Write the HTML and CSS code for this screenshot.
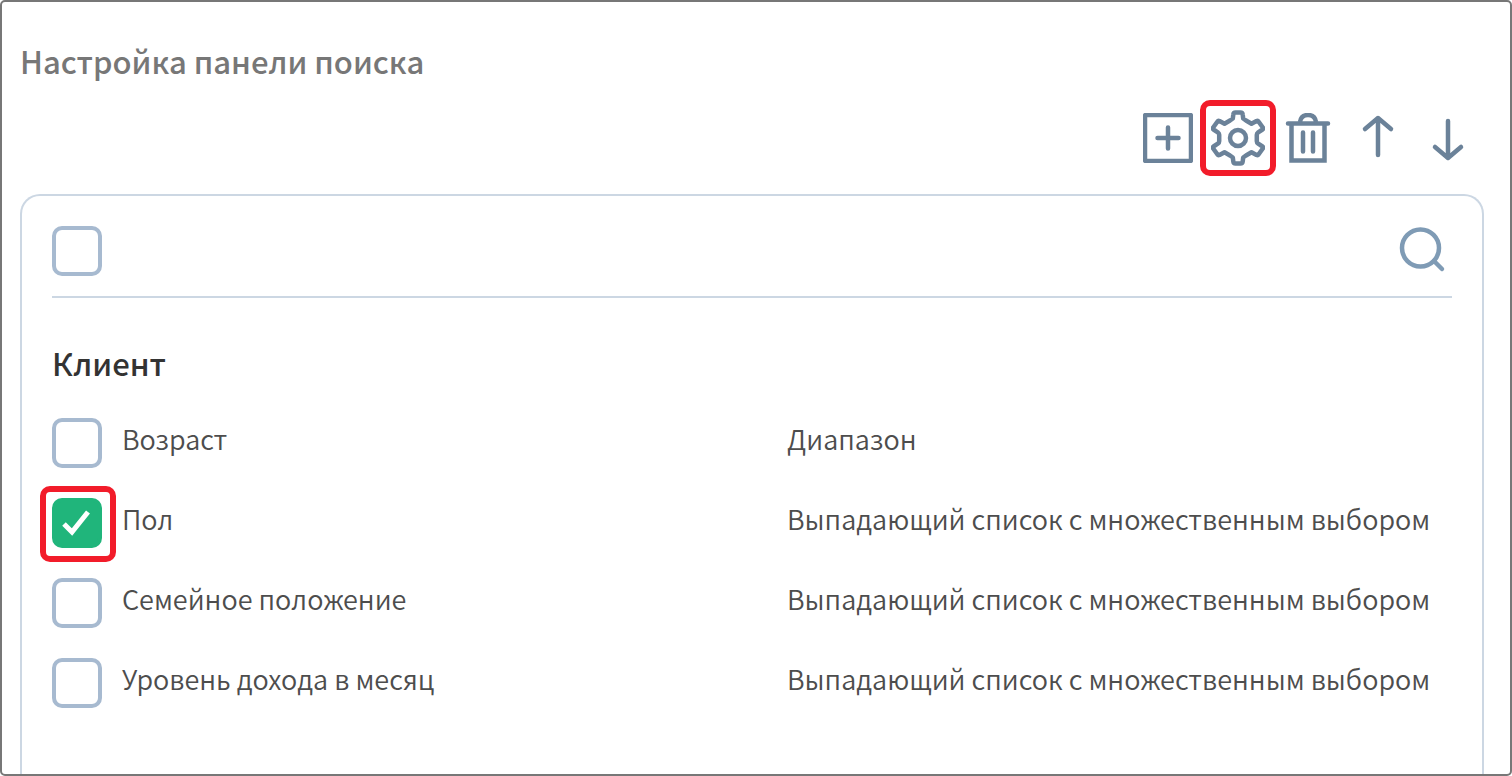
FILE: index.html
```html
<!DOCTYPE html>
<html lang="ru">
<head>
<meta charset="utf-8">
<title>Настройка панели поиска</title>
<link rel="stylesheet" href="styles.css">
</head>
<body>
<main class="window">
  <h1 class="title">Настройка панели поиска</h1>
  <div class="toolbar">
    <button class="tool" type="button" aria-label="Добавить">
      <svg class="icon" viewBox="0 0 50 50"><rect x="2" y="2" width="46" height="46" rx="1"/><path d="M25 14.500v21M14.500 25h21" stroke-linecap="round"/></svg>
    </button>
    <button class="tool marked" type="button" aria-label="Настроить">
      <svg class="icon gear" viewBox="0 0 54 56"><path d="M24.500 2.500h5q2 0 2.200 2l.5 4L35 10.500l5.500 3.200L45.500 11q1.300-.6 2 .5l4.300 6q.7 1.200-.3 2l-4.300 2.800q-1.400 1-1.400 2.500v6.400q0 1.500 1.400 2.500l4.300 2.800q1 .8.3 2l-4.300 6q-.7 1.100-2 .5l-5-2.700-5.500 3.200-2.800 2-.5 4q-.2 2-2.200 2h-5q-2 0-2.200-2l-.5-4-2.800-2-5.500-3.200-5 2.700q-1.300.6-2-.5l-4.300-6q-.7-1.200.3-2l4.300-2.800q1.400-1 1.400-2.500v-6.400q0-1.500-1.400-2.500l-4.300-2.800q-1-.8-.3-2l4.300-6q.7-1.100 2-.5l5 2.700 5.500-3.200 2.800-2 .5-4q.2-2 2.200-2z" stroke-linejoin="round"/><circle cx="27" cy="28" r="8"/></svg>
    </button>
    <button class="tool" type="button" aria-label="Удалить">
      <svg class="icon" viewBox="0 0 50 50"><path d="M5 10.500h40M8.500 10.500v37h33v-37" stroke-linecap="round"/><path d="M17 9q1-7 8-7t8 7"/><path d="M20 19.500v19M30 19.500v19" stroke-linecap="round"/></svg>
    </button>
    <button class="tool" type="button" aria-label="Вверх">
      <svg class="icon" viewBox="0 0 50 50"><path d="M25 42V5M12 16L25 5l13 11" stroke-linecap="round" stroke-linejoin="round"/></svg>
    </button>
    <button class="tool" type="button" aria-label="Вниз">
      <svg class="icon" viewBox="0 0 50 50"><path d="M25 8v37M12 34l13 11 13-11" stroke-linecap="round" stroke-linejoin="round"/></svg>
    </button>
  </div>
  <section class="panel">
    <div class="panel-head">
      <span class="check"><input class="box" type="checkbox" aria-label="Выбрать все"></span>
      <button class="tool search" type="button" aria-label="Поиск">
        <svg class="icon" viewBox="0 0 50 50"><circle cx="21.500" cy="22" r="18.500"/><path d="M35 35l8 8" stroke-linecap="round"/></svg>
      </button>
    </div>
    <h2 class="group">Клиент</h2>
    <ul class="fields">
      <li class="field"><span class="check"><input class="box" type="checkbox" id="age"></span><label for="age">Возраст</label><span>Диапазон</span></li>
      <li class="field"><span class="check marked"><input class="box" type="checkbox" id="sex" checked><svg class="tick" viewBox="0 0 50 50"><path d="M12 26l8 8 16-20"/></svg></span><label for="sex">Пол</label><span>Выпадающий список с множественным выбором</span></li>
      <li class="field"><span class="check"><input class="box" type="checkbox" id="family"></span><label for="family">Семейное положение</label><span>Выпадающий список с множественным выбором</span></li>
      <li class="field"><span class="check"><input class="box" type="checkbox" id="income"></span><label for="income">Уровень дохода в месяц</label><span>Выпадающий список с множественным выбором</span></li>
    </ul>
  </section>
</main>
</body>
</html>
```
FILE: styles.css
```css
* { box-sizing: border-box; }
body {
  margin: 0;
  background: #fff;
  color: #4d4d4d;
  font: 350 27px/40px "Noto Sans CJK SC", "Noto Sans", sans-serif;
}
.window {
  display: flex;
  flex-direction: column;
  min-height: 100vh;
  padding: 39px 26px 0 18px;
  border: 2px solid #777;
  border-radius: 5px;
}
.title, .group { margin: 0; font-weight: 500; font-size: 31px; line-height: 40px; }
.title { color: #777; }
.toolbar {
  display: flex;
  justify-content: flex-end;
  gap: 20px;
  padding: 32px 11px 31px 0;
}
.tool {
  position: relative;
  display: flex;
  align-items: center;
  justify-content: center;
  width: 50px;
  height: 50px;
  padding: 0;
  border: 0;
  background: none;
  color: #6b8299;
}
.search { margin-right: 3px; color: #7f9bb5; }
.icon {
  flex: none;
  width: 50px;
  height: 50px;
  fill: none;
  stroke: currentColor;
  stroke-width: 4.5;
}
.gear { width: 54px; height: 56px; }
.marked::after {
  content: "";
  position: absolute;
  inset: -13px;
  border: 6px solid #f21c2a;
  border-radius: 10px;
  pointer-events: none;
}
.check.marked::after { inset: -12px -14px -14px -12px; }
.panel {
  flex: 1;
  padding: 30px 30px 48px;
  border: 2px solid #ccd7e3;
  border-bottom: 0;
  border-radius: 20px 20px 0 0;
}
.panel-head {
  display: flex;
  justify-content: space-between;
  padding-bottom: 20px;
  border-bottom: 2px solid #ccd7e3;
}
.check { position: relative; display: block; width: 50px; height: 50px; }
.box {
  appearance: none;
  display: block;
  width: 50px;
  height: 50px;
  margin: 0;
  border: 4px solid #a7bad0;
  border-radius: 10px;
  background: #fff;
}
.box:checked { border-color: #20b57b; background: #20b57b; }
.tick {
  position: absolute;
  inset: 0;
  fill: none;
  stroke: #fff;
  stroke-width: 5;
  pointer-events: none;
}
.group { margin: 45px 0 35px; color: #333; }
.fields { display: grid; gap: 30px; margin: 0; padding: 0; list-style: none; }
.field {
  display: grid;
  grid-template-columns: 70px 1fr 1fr;
  height: 50px;
  line-height: 42px;
}
```
